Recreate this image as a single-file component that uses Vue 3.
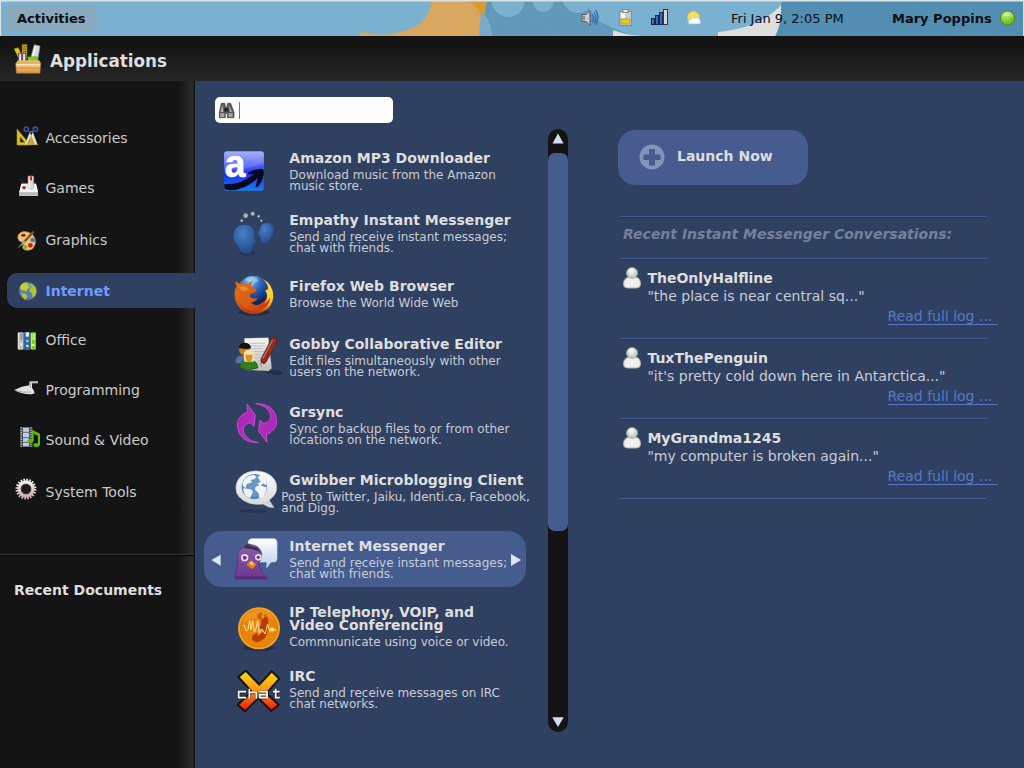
<script setup>
const categories = [
  { id: 'accessories', label: 'Accessories', y: 33 },
  { id: 'games', label: 'Games', y: 183 },
  { id: 'graphics', label: 'Graphics', y: 339 },
  { id: 'internet', label: 'Internet', y: 489, active: true },
  { id: 'office', label: 'Office', y: 39 },
  { id: 'programming', label: 'Programming', y: 189 },
  { id: 'sound', label: 'Sound & Video', y: 339 },
  { id: 'system', label: 'System Tools', y: 495 },
]

const apps = [
  { id: 'amazon', y: 159, title: ['Amazon MP3 Downloader'], desc: ['Download music from the Amazon', 'music store.'] },
  { id: 'empathy', y: 345, title: ['Empathy Instant Messenger'], desc: ['Send and receive instant messages;', 'chat with friends.'] },
  { id: 'firefox', y: 33, title: ['Firefox Web Browser'], desc: ['Browse the World Wide Web'] },
  { id: 'gobby', y: 207, title: ['Gobby Collaborative Editor'], desc: ['Edit files simultaneously with other', 'users on the network.'] },
  { id: 'grsync', y: 411, title: ['Grsync'], desc: ['Sync or backup files to or from other', 'locations on the network.'] },
  { id: 'gwibber', y: 15, title: ['Gwibber Microblogging Client'], desc: ['Post to Twitter, Jaiku, Identi.ca, Facebook,', 'and Digg.'], wide: true },
  { id: 'messenger', y: 213, title: ['Internet Messenger'], desc: ['Send and receive instant messages;', 'chat with friends.'], active: true },
  { id: 'voip', y: 21, title: ['IP Telephony, VOIP, and', 'Video Conferencing'], desc: ['Commnunicate using voice or video.'] },
  { id: 'irc', y: 213, title: ['IRC'], desc: ['Send and receive messages on IRC', 'chat networks.'] },
]

const conversations = [
  { name: 'TheOnlyHalfline', quote: '"the place is near central sq..."' },
  { name: 'TuxThePenguin', quote: '"it\'s pretty cold down here in Antarctica..."' },
  { name: 'MyGrandma1245', quote: '"my computer is broken again..."' },
]
</script>

<template>
  <div class="screen">
    <svg class="sheet" width="0" height="0">
      <defs>
        <linearGradient id="gAmazon" x1="0" y1="0" x2="0" y2="1">
          <stop offset="0" stop-color="#9aa6f6" /><stop offset=".4" stop-color="#4356f2" /><stop offset=".6" stop-color="#1a30f5" /><stop offset="1" stop-color="#1c7dec" />
        </linearGradient>
        <radialGradient id="gFeet" cx=".4" cy=".3" r=".8"><stop offset="0" stop-color="#4a80c4" /><stop offset="1" stop-color="#1f4186" /></radialGradient>
        <radialGradient id="gGlobe" cx=".4" cy=".15" r=".8"><stop offset="0" stop-color="#8ec5ee" /><stop offset=".45" stop-color="#2d68b8" /><stop offset="1" stop-color="#0b2460" /></radialGradient>
        <linearGradient id="gFox" x1="0" y1="0" x2="1" y2="1"><stop offset="0" stop-color="#d87420" /><stop offset=".55" stop-color="#dc5a14" /><stop offset="1" stop-color="#b92c08" /></linearGradient>
        <linearGradient id="gFlame" x1="0" y1="0" x2="0" y2="1"><stop offset="0" stop-color="#f6e05a" /><stop offset=".55" stop-color="#ffcf2c" /><stop offset="1" stop-color="#e2600f" /></linearGradient>
        <linearGradient id="gPurple" x1="0" y1="0" x2="1" y2="1"><stop offset="0" stop-color="#a624b2" /><stop offset="1" stop-color="#ba31c3" /></linearGradient>
        <linearGradient id="gBubble" x1="0" y1="0" x2="0" y2="1"><stop offset="0" stop-color="#f9fafa" /><stop offset="1" stop-color="#d5d9d6" /></linearGradient>
        <linearGradient id="gTalk" x1="0" y1="0" x2="0" y2="1"><stop offset="0" stop-color="#fff" /><stop offset="1" stop-color="#b9cee9" /></linearGradient>
        <linearGradient id="gBird" x1="0" y1="0" x2="0" y2="1"><stop offset="0" stop-color="#8b62a8" /><stop offset="1" stop-color="#6b3593" /></linearGradient>
        <radialGradient id="gCoin"><stop offset="0" stop-color="#ef8b0c" /><stop offset=".8" stop-color="#ea8208" /><stop offset="1" stop-color="#f5a21c" /></radialGradient>
        <linearGradient id="gX" x1="0" y1="0" x2="0" y2="1"><stop offset="0" stop-color="#ffdf12" /><stop offset=".5" stop-color="#fb9116" /><stop offset="1" stop-color="#f0130a" /></linearGradient>
        <linearGradient id="gPaper" x1="0" y1="0" x2="0" y2="1"><stop offset="0" stop-color="#f6f6f6" /><stop offset="1" stop-color="#bfc0bf" /></linearGradient>
        <linearGradient id="gBox" x1="0" y1="0" x2="0" y2="1"><stop offset="0" stop-color="#f7d49b" /><stop offset="1" stop-color="#d79335" /></linearGradient>
        <linearGradient id="gGear" x1="0" y1="0" x2="0" y2="1"><stop offset="0" stop-color="#f4f0f0" /><stop offset="1" stop-color="#d0acb3" /></linearGradient>
        <radialGradient id="gHead" cx=".45" cy=".3" r=".7"><stop offset="0" stop-color="#fff" /><stop offset="1" stop-color="#b9b9b3" /></radialGradient>
        <radialGradient id="gGreen" cx=".4" cy=".3" r=".7"><stop offset="0" stop-color="#b7ec6b" /><stop offset="1" stop-color="#5eb61c" /></radialGradient>

        <!-- sidebar icons -->
        <g id="accessories">
          <path d="M51 57 L91 105 H51Z" fill="#dcc224" stroke="#a18b13" stroke-width="2" /><path d="M60 80v17h14z" fill="#171717" stroke="#9c8914" stroke-width="2" />
          <path d="M86 98l8-25 17 32H85z" fill="#c9ad1b" />
          <path d="M89 66l9-1 15 41-9-5zM99 66l-9-1-16 41 9-6z" fill="#e8e8e4" stroke="#a5a7a2" stroke-width="1" />
          <circle cx="79" cy="58" r="6.500" fill="none" stroke="#2e569b" stroke-width="5" /><circle cx="106" cy="58" r="6.500" fill="none" stroke="#2e569b" stroke-width="5" />
        </g>
        <g id="games">
          <path d="M62 211q4-2 6 4t8 3" fill="none" stroke="#555" stroke-width="2" />
          <path d="M64 221h44l6 26v11H58v-11z" fill="#dededb" /><path d="M64 221h44l6 25H58z" fill="#f5f5f4" /><path d="M58 247h56v10H58z" fill="#b9bab7" />
          <rect x="84" y="198" width="17" height="39" rx="4" fill="#d9dad8" stroke="#a5a5a2" stroke-width="1.5" /><rect x="90" y="199" width="6" height="12" fill="#d11919" /><rect x="86" y="210" width="4" height="25" fill="#fff" />
          <ellipse cx="72" cy="233" rx="6" ry="4" fill="#cc1a1a" />
        </g>
        <g id="graphics">
          <path d="M55 374q10-13 28-8 16 4 22 19 5 18-7 31-12 8-25 3-9-5-3-14 3-7-6-9-15-6-9-22z" fill="#eec078" stroke="#b98842" stroke-width="2" />
          <ellipse cx="70" cy="376" rx="7" ry="4" fill="#4a300e" /><circle cx="91" cy="406" r="7" fill="#d01e1a" /><circle cx="76" cy="411" r="6" fill="#6fb91b" /><circle cx="98" cy="390" r="7" fill="#4b78b8" />
          <path d="M101 365L72 396" stroke="#875016" stroke-width="7" /><path d="M74 391L52 415l23-16" fill="#b0b3b4" stroke="#555" />
        </g>
        <g id="internet">
          <circle cx="84" cy="543" r="27" fill="#527fb8" stroke="#3e608f" stroke-width="2" />
          <path d="M60 532q4-13 18-15l9 5-4 6 7 3-8 6-3 9-8-5-4 3-6-6zM64 548l13 3 6 8-6 11q-12-7-13-22zM90 521q12 3 17 13l2 10-4 14-7 4-3-13-7-6 2-9 7-4-7-3z" fill="#b7c41d" />
          <ellipse cx="76" cy="530" rx="16" ry="9" fill="#fff" opacity=".17" />
        </g>
        <g id="office">
          <rect x="53" y="67" width="18" height="52" rx="3" fill="#bfc2b6" /><rect x="72" y="66" width="19" height="54" rx="3" fill="#3762a5" /><rect x="92" y="67" width="16" height="52" rx="3" fill="#76ce17" />
          <path d="M56 69v47M94 69v47" stroke="#fff" stroke-width="3" opacity=".65" />
          <rect x="77" y="67" width="10" height="13" fill="#dce9f7" /><rect x="60" y="70" width="8" height="20" fill="#9c9f94" /><rect x="97" y="70" width="8" height="20" fill="#b3ef70" />
          <circle cx="64" cy="103" r="4" fill="#e8e8e3" /><circle cx="82" cy="93" r="4" fill="#a9c5e8" /><circle cx="82" cy="108" r="4" fill="#dbe8f7" /><circle cx="100" cy="105" r="4" fill="#ddf8b9" />
        </g>
        <g id="programming">
          <path d="M43 240q22-12 45-14v-9q0-3 5-3h21v6H96v13q7 9 8 17l-10 3q-27 1-51-13z" fill="#e2e2df" /><path d="M91 233v-13q0-4 5-4h18" fill="none" stroke="#83837f" stroke-width="2" /><path d="M49 242q18 7 45 4" stroke="#aaa" stroke-width="3" fill="none" />
        </g>
        <g id="sound">
          <rect x="60" y="351" width="38" height="60" fill="#494b4c" /><rect x="69" y="353" width="18" height="56" fill="#b8cce5" />
          <path d="M64 352v58M93 352v58" stroke="#d3d5d3" stroke-width="4" stroke-dasharray="3 4" /><path d="M69 367h18M69 383h18M69 397h18" stroke="#5c6c83" stroke-width="3" />
          <path d="M98 393v-29l19 9v33" fill="none" stroke="#63c000" stroke-width="6" /><path d="M99 362l18 9v8l-18-9z" fill="#63c000" stroke="#478f00" />
          <ellipse cx="91" cy="393" rx="9" ry="6" fill="#5bb400" /><ellipse cx="109" cy="405" rx="9" ry="6" fill="#5bb400" />
        </g>
        <g id="system">
          <circle cx="78" cy="537" r="28" fill="none" stroke="url(#gGear)" stroke-width="7" stroke-dasharray="5 3.8" /><circle cx="78" cy="537" r="21" fill="none" stroke="url(#gGear)" stroke-width="10" />
          <circle cx="78" cy="537" r="15" fill="#1b1b1b" stroke="#8c7b7e" stroke-width="1.5" />
        </g>

        <!-- application icons -->
        <g id="amazon">
          <rect x="72" y="184" width="120" height="118" rx="9" fill="url(#gAmazon)" />
          <path d="M73 190q0-5 6-5h106q6 0 6 6v28q-60 26-118 20z" fill="#fff" opacity=".13" />
          <text x="74" y="260" font-family="Liberation Sans, Arial, sans-serif" font-weight="700" font-size="118" textLength="62" lengthAdjust="spacingAndGlyphs" fill="#fff" stroke="#fff" stroke-width="2">a</text>
          <path d="M73 282q48 4 90-30l-14 1q-9-2-2-7 18-9 38-10 8 1 6 16-4 23-18 39-8 3-5-6l6-22q-38 37-83 38-17-1-18-7z" fill="#05071c" />
        </g>
        <g id="empathy">
          <ellipse cx="143" cy="489" rx="25" ry="8" fill="#1c2741" opacity=".5" />
          <path d="M101 438q0-31 29-34 31-2 34 28l-1 12 6 9-6 8q-5 0-5 12-2 21-21 19-14-3-23-25-12-10-13-29z" fill="url(#gFeet)" />
          <path d="M174 430l5-9q1-22 20-22 22 1 23 22 0 14-10 22-9 19-18 18-12-1-12-12l-2-11-6-3z" fill="url(#gFeet)" />
          <g fill="#aab0ab"><circle cx="125" cy="392" r="4" /><circle cx="137" cy="377" r="7" /><circle cx="158" cy="371" r="6" /><circle cx="176" cy="379" r="4" /><circle cx="184" cy="392" r="3.5" /></g>
        </g>
        <g id="firefox">
          <ellipse cx="162" cy="157" rx="48" ry="10" fill="#172039" opacity=".55" />
          <circle cx="161" cy="106" r="56" fill="url(#gFox)" />
          <circle cx="160" cy="92" r="45" fill="url(#gGlobe)" />
          <path d="M141 54q14-6 28 0l6 9-12 6-6 10-12-3 3-10-12-4z" fill="#a5d5f3" opacity=".6" />
          <path d="M191 59q20 9 27 34 8 36-20 58-16 9-32 8l18-20q18-12 17-32-1-10-6-16 9 0 9-8-1-13-13-24z" fill="url(#gFlame)" />
          <path d="M107 64q8 4 12 9 12-5 26 0 4-8 12-9-5 10-3 16l16 8q0 9-15 12-7 4-5 10 9 9 23 3-5 13-20 15 10 9 25 7 24-2 32-24 0 20-16 33-20 18-46 13-34-9-43-41-5-22 5-38-4-5-3-14z" fill="url(#gFox)" />
          <path d="M112 116q6 26 39 36 32 8 56-12-18 24-52 22-34-8-43-46z" fill="#c0330a" opacity=".8" />
          <path d="M116 80l21 0 12 10-22 4z" fill="#ed9a3c" opacity=".7" />
        </g>
        <g id="gobby">
          <path d="M178 329l57 2q18 7 9 14-27 2-66-16z" fill="#1c263c" opacity=".65" />
          <path d="M133 235l72-2 10 92-10 8-69-4z" fill="url(#gPaper)" stroke="#9a9c9a" /><path d="M150 250h45M150 258h45M150 266h38M160 275h35M160 284h28M163 293h22M173 302h18M173 312h25" stroke="#aaa" stroke-width="2" />
          <path d="M216 233q8-4 15 4l-1 12-31 56-15 15-1-23z" fill="#8e2e20" stroke="#5d180e" stroke-width="2" /><path d="M218 239l-29 57" stroke="#c06b53" stroke-width="4" /><path d="M184 309v12l9-7" fill="#ead6b8" />
          <path d="M106 310q-2-25 20-25 19 2 18 28z" fill="#54739f" stroke="#2f4366" stroke-width="2" /><circle cx="133" cy="269" r="16" fill="#cd7b1d" /><path d="M117 265q-1-17 18-17 17 1 18 17l-12 2z" fill="#11100d" />
          <path d="M119 323q1-23 28-24 24 1 27 24-26 11-55 0z" fill="#337f20" stroke="#19510d" stroke-width="2" /><path d="M131 285q0-16 16-16t16 16l-2 20h-28z" fill="#eee2a8" /><path d="M137 284h20v10q-2 12-10 12t-10-12z" fill="#e4941c" />
        </g>
        <g id="grsync">
          <path id="sync-arrow" d="M141 432L166 465L162 499L151 488Q125 494 131 518Q142 543 175 548Q119 549 112 500Q110 468 143 455Z" fill="url(#gPurple)" stroke="#cf4fd5" stroke-width="2.500" stroke-linejoin="round" />
          <use href="#sync-arrow" transform="rotate(180 171 489.500)" />
        </g>
        <g id="gwibber">
          <ellipse cx="159" cy="153" rx="42" ry="5" fill="#1d2742" opacity=".5" />
          <path d="M169 33c34 1 61 20 61 49 0 18-10 30-23 38l14 22q-16 2-31-10-46 6-73-22-9-10-9-26c0-30 26-51 61-51z" fill="url(#gBubble)" stroke="#cccfc8" stroke-width="2" />
          <circle cx="163" cy="80" r="38" fill="#5685bd" /><circle cx="162" cy="78" r="32" fill="#7ba5d0" opacity=".55" />
          <path d="M127 70q10-25 34-26l9 7-8 7-10 2 4 7-16 6-3 11-8-5zM130 85l22 3 7 7-9 19q-21-6-20-29zM173 51l9-6q14 8 19 27l-3 4-9-6-7 8-10-7 10-6zM166 81l12-5 22 6q-2 20-14 31l-8 2-2-16-11-9z" fill="#f0f4f7" />
          <path d="M205 124l12 15-23-10z" fill="#c7cbc3" />
        </g>
        <g id="messenger">
          <path d="M154 236h68q9 1 9 11v49q-1 10-9 10h-9l-13 17 1-17h-40q-10 0-12-10l-5-47q1-12 10-13z" fill="url(#gTalk)" stroke="#c9dbf1" stroke-width="2" />
          <path d="M132 260l10-9 12 3q26 3 31 26 2 17-9 28 4 17 11 32l15 13v4H105v-12l5-20q6-22 4-34-4-20 18-31z" fill="url(#gBird)" stroke="#4e2c69" stroke-width="2" />
          <path d="M133 260l10-8 13 7 15 3 12 17q-24-15-50-13z" fill="#3b334b" /><path d="M106 348h88l8 8H105z" fill="#572670" opacity=".7" />
          <circle cx="134" cy="293" r="11" fill="#e6deed" /><circle cx="175" cy="292" r="10" fill="#e6deed" /><circle cx="134" cy="293" r="6" fill="#68388a" /><circle cx="175" cy="292" r="5" fill="#68388a" />
          <path d="M139 314l15-13 15 12-11 15z" fill="#e47e13" /><path d="M146 309l9-6 8 9-7 5z" fill="#ffb94a" />
        </g>
        <g id="voip">
          <ellipse cx="178" cy="174" rx="50" ry="8" fill="#18213a" opacity=".55" />
          <circle cx="177" cy="115" r="61" fill="url(#gCoin)" stroke="#f6a41f" stroke-width="4" /><circle cx="177" cy="115" r="55" fill="none" stroke="#cf5d08" stroke-width="2" />
          <path d="M170 79q8-15 17-11l-4 20q11 2 10-18 12 4 12 34 0 45-34 53-18-4-15-15 2-10 18-15l-2 12 18-16-12-10q9-13 4-25z" fill="#b93c08" />
          <path d="M129 108l4-3 5 18 6-4 5-28 4 28 5-27 5 34 5-10 5-25 5 40 8-14 9 15 8-29 6 20 7-6 13 4" fill="none" stroke="#ffe7a1" stroke-width="3" />
          <circle cx="217" cy="119" r="8" fill="#ffcf38" opacity=".6" /><circle cx="217" cy="119" r="4" fill="#fff3ad" />
          <path d="M127 96q15-36 51-38 34 1 46 31-35-19-97 7z" fill="#ffc355" opacity=".25" />
        </g>
        <g id="irc">
          <path d="M115 261l22-19 41 42 37-40 23 22-39 44 37 34-22 19-39-39-40 40-22-20 42-39z" fill="url(#gX)" stroke="#161310" stroke-width="6" stroke-linejoin="round" />
          <g fill="none" stroke="#22170f" stroke-width="9" opacity=".7"><path d="M139 306h-22v17h22M148 297v29m0-18h21v18M178 306h23v20m0-11h-22v9h22M227 297v26h11M219 306h19" /></g>
          <g fill="none" stroke="#fff" stroke-width="5"><path d="M138 305h-22v18h22M148 296v30m0-19h21v19M178 305h23v21m0-12h-22v9h22M227 296v27h12M219 305h20" /></g>
        </g>
      </defs>
    </svg>

    <header class="panel">
      <svg class="art" viewBox="0 0 1024 36" width="1024" height="36">
        <rect width="1024" height="36" fill="#7bb1d0" />
        <path d="M486 0H584Q590 13 600 22 620 32 636 36H479Z" fill="#6299bb" />
        <path d="M782 0H1024V36H776Z" fill="#528eb2" />
        <path d="M431 0Q431 28 391 34 375 36 365 32 360 33 357 36H480L487 0Z" fill="#d9a75f" />
        <path d="M466 0H487L480 30Q486 10 466 0Z" fill="#dc9931" />
        <path d="M481 12Q491 18 492 36H479Z" fill="#77abc9" />
        <g fill="#7bb1d0"><path d="M491 0H525Q522 17 508 17 494 16 491 0ZM532 0H554Q552 12 543 12 534 11 532 0Z" /><path d="M562 0Q566 12 578 13 583 13 588 10L591 0Z" /></g>
        <path d="M613 30Q625 35 642 36H613ZM718 32Q744 29 755 23 770 17 781 5 782 24 775 36H718Z" fill="#dedede" />
        <path d="M500 18l24 18M530 15l28 21M805 1l43 35M910 1l43 35M960 1l43 35" stroke="#86b5d0" opacity=".15" />
        <path d="M0 .7H1024" stroke="#dce4e6" stroke-width="1.400" /><path d="M.5 0V36M1023.5 0V36" stroke="#dce4e6" />
      </svg>
      <button class="activities">Activities</button>
      <div class="tray">
        <svg class="tray-icons" viewBox="0 0 130 36" width="130" height="36">
          <path d="M2 14.500h4l4-4v15l-4-4H2z" fill="#ccc" stroke="#555" /><path d="M4 16v4" stroke="#888" stroke-width="2" />
          <path d="M12 14q3 4 0 8M14 12q4 6 0 11M15.500 10q5 7 0 15" fill="none" stroke="#376ba9" stroke-width="1.3" />
          <rect x="39.5" y="11.5" width="12" height="14" fill="#c9cbc7" stroke="#8a8c88" /><rect x="43" y="9.5" width="5" height="3" fill="#e5e6e3" stroke="#8a8c88" /><rect x="41" y="19" width="9" height="5" fill="#e3ce0b" stroke="#a29314" stroke-width=".6" /><path d="M41 13h4v5h-4z" fill="#f6f6f5" />
          <g fill="#3e6bb5" stroke="#172951"><rect x="71.5" y="18.5" width="3" height="6" /><rect x="75.5" y="15.5" width="3" height="9" /><rect x="79.5" y="12.5" width="3" height="12" /></g><rect x="83.5" y="9.5" width="4" height="15" fill="#d5d5d8" stroke="#303444" />
          <circle cx="113.5" cy="17.5" r="6" fill="#f2de62" stroke="#e9c937" /><path d="M109 24q-2-4 2-5 2-3 5-1 4-1 4 3 2 2-1 3z" fill="#fff" stroke="#aab9cf" stroke-width=".7" />
        </svg>
        <span class="clock">Fri Jan 9, 2:05 PM</span>
        <span class="user">Mary Poppins</span>
        <svg width="17" height="18" viewBox="0 0 17 18"><circle cx="8.5" cy="9" r="7.2" fill="url(#gGreen)" stroke="#458b16" /><path d="M3 8q1-5 6-5 4 0 5 5-6-2-11 0z" fill="#fff" opacity=".35" /></svg>
      </div>
    </header>

    <div class="titlebar">
      <svg viewBox="36 123 90 105" width="30" height="35">
        <path d="M42 146l13-3 12 26-10 8z" fill="#e7cb19" stroke="#806d08" stroke-width="2" /><rect x="66" y="133" width="15" height="45" fill="#c7a119" stroke="#715b0b" stroke-width="2" /><path d="M70 140h8M70 147h8M70 154h8" stroke="#57450d" stroke-width="2" />
        <path d="M103 134l17 4-7 43-22-3z" fill="#d8dbd8" stroke="#8c8f8b" stroke-width="2" /><path d="M105 139l-7 34" stroke="#fff" stroke-width="4" />
        <path d="M56 160h9v25h-9zM68 160h9v25h-9z" fill="#e9e5ee" stroke="#63426e" stroke-width="3" /><path d="M84 170h28v14H84z" fill="#79cf1d" stroke="#3f810b" />
        <path d="M47 190l7-9h63l6 9z" fill="#e6b86e" /><path d="M47 190h75l-2 30H49z" fill="url(#gBox)" stroke="#9b6b24" stroke-width="2" /><path d="M49 204h72" stroke="#b97931" stroke-width="2" /><path d="M49 193h72" stroke="#ffe5b6" stroke-width="5" />
      </svg>
      <h1>Applications</h1>
    </div>

    <div class="body">
      <aside class="sidebar">
        <nav>
          <a v-for="c in categories" :key="c.id" class="category" :class="{ active: c.active }">
            <svg width="45" height="35" :viewBox="`0 ${c.y} 135 105`"><use :href="'#' + c.id" /></svg>
            <span>{{ c.label }}</span>
          </a>
        </nav>
        <h2>Recent Documents</h2>
      </aside>

      <main class="browser">
        <div class="search">
          <svg viewBox="54 33 51 51" width="17" height="17">
            <path d="M64 37h10l3 13h3l3-13h9l10 27v16H82V67h-6v13H58V64z" fill="#5a5d59" stroke="#343634" stroke-width="2" />
            <path d="M67 41l-6 22h9zM86 41l4 22h6z" fill="#b1b3ae" /><rect x="61" y="67" width="12" height="11" fill="#a6a8a2" /><rect x="86" y="67" width="12" height="11" fill="#a6a8a2" /><path d="M72 51h13v11H72z" fill="#272927" />
          </svg>
          <i class="caret"></i>
        </div>
        <div class="app-list">
          <article v-for="a in apps" :key="a.id" class="app" :class="{ active: a.active, wide: a.wide }">
            <svg width="84" height="60" :viewBox="`12 ${a.y} 252 180`">
              <path v-if="a.active" d="M34 300l28-16v33z" fill="#dce5fa" />
              <use :href="'#' + a.id" />
            </svg>
            <div class="copy">
              <h3><span v-for="t in a.title" :key="t">{{ t }}</span></h3>
              <p><span v-for="d in a.desc" :key="d">{{ d }}</span></p>
            </div>
            <svg v-if="a.active" class="next" width="10" height="12"><path d="M0 0l10 6-10 6z" fill="#dce5fa" /></svg>
          </article>
        </div>
      </main>

      <div class="scrollbar">
        <svg width="20" height="24"><path d="M10 4.500l5.500 10h-11z" fill="#d4def8" /></svg>
        <div class="thumb"></div>
        <svg class="down" width="20" height="24"><path d="M4.300 9.300h11.400L10 19z" fill="#d4def8" /></svg>
      </div>

      <section class="details">
        <button class="launch">
          <svg width="26" height="26"><circle cx="13" cy="13" r="12.500" fill="#8195bc" /><path d="M10 5h6v5.500h5.500v5.500H16v5.500h-6V16H4.500v-5.500H10z" fill="#465c8f" /></svg>
          <span>Launch Now</span>
        </button>
        <h2 class="rule">Recent Instant Messenger Conversations:</h2>
        <article v-for="c in conversations" :key="c.name" class="conversation rule">
          <svg width="18" height="22">
            <path d="M.5 17q0-6 6-7h6q5 1 5 7 0 4-4 4h-9q-4 0-4-4z" fill="#efefec" stroke="#b1b2ac" /><circle cx="9" cy="6" r="5.500" fill="url(#gHead)" stroke="#aaaaa5" stroke-width=".7" />
          </svg>
          <div>
            <h3>{{ c.name }}</h3>
            <p>{{ c.quote }}</p>
          </div>
          <a>Read full log ...&nbsp;</a>
        </article>
        <div class="rule"></div>
      </section>
    </div>
  </div>
</template>

<style>
body { margin: 0; background: #141414; }
</style>

<style scoped>
.screen { position: relative; width: 1024px; height: 768px; overflow: hidden; display: flex; flex-direction: column; background: #304060; color: #dedede; font-family: "DejaVu Sans", sans-serif; font-size: 14px; }
.screen * { box-sizing: border-box; }
h1, h2, h3, p { margin: 0; font-size: 14px; white-space: nowrap; }
button { border: 0; font: inherit; color: inherit; }
svg { display: block; flex: none; }
.sheet { position: absolute; }
.panel { position: relative; flex: none; height: 36px; display: flex; align-items: center; justify-content: space-between; color: #0b0d10; font-size: 13px; }
.art { position: absolute; inset: 0; }
.activities { position: relative; margin-left: 5px; width: 92px; height: 27px; padding: 0 0 0 12px; border-radius: 8px; background: #89aabd; font-weight: 700; text-align: left; }
.tray { position: relative; display: flex; align-items: center; padding-right: 8px; white-space: nowrap; }
.clock { width: 182px; padding-left: 21px; }
.user { width: 107px; font-weight: 700; }
.titlebar { flex: none; height: 45px; display: flex; align-items: center; padding: 0 0 0 12px; background: linear-gradient(#141414 20%, #272727); }
.titlebar svg { margin-top: -1px; }
.titlebar h1 { margin: 5px 0 0 8px; font-size: 16.800px; line-height: 20px; }
.body { flex: 1; display: flex; min-height: 0; }
.sidebar { flex: none; width: 195px; background: linear-gradient(90deg, transparent 178px, #2d2d2d 193px, #111 194px) #141414; }
.sidebar nav { height: 474px; padding-top: 40px; display: grid; grid-template-rows: 50px 52px 50px 50px 50px 50px 52px 35px; align-items: start; border-bottom: 1px solid #3a3a3a; box-shadow: 0 1px #000; }
.category { height: 35px; display: flex; align-items: center; color: #cacaca; white-space: nowrap; }
.category span { margin-left: .5px; padding-bottom: 2px; }
.category.active span { padding-bottom: 0; }
.category.active { margin-left: 7px; border-radius: 10px 0 0 10px; background: #304060; color: #6e9cff; font-weight: 700; }
.category.active svg { margin-left: -7px; }
.sidebar h2 { margin: 27px 0 0 14px; line-height: 17px; }
.browser { flex: none; width: 353px; }
.search { display: flex; align-items: center; width: 178px; height: 26px; margin: 16px 0 20px 20px; padding-left: 3px; border-radius: 5px; background: #fff; }
.caret { width: 1px; height: 17px; margin-left: 4px; background: #777; }
.app-list { display: grid; grid-template-rows: 62px 66px 58px 68px 68px 66px 66px 64px 60px; align-items: start; margin-left: 9px; }
.app { display: flex; height: 56px; width: 322px; }
.app .copy { width: 241px; margin-left: 1.300px; padding-top: 9px; }
.app h3 { line-height: 13px; }
.app p { margin-top: 5px; font-size: 12px; line-height: 11px; color: #c9ccd3; }
.app span { display: block; }
.app.wide p { margin-left: -8px; }
.app.active { position: relative; border-radius: 18px; background: #465c8f; }
.next { position: absolute; left: 307px; top: 23px; }
.scrollbar { flex: none; width: 20px; height: 603px; margin-top: 48px; border-radius: 10px; background: #141414; overflow: hidden; display: flex; flex-direction: column; }
.thumb { height: 378px; border-radius: 7px; background: #465c8f; }
.down { margin-top: auto; }
.details { width: 366px; margin: 49px 0 0 52px; }
.launch { display: flex; align-items: center; width: 190px; height: 55px; margin: 0 0 31px -2px; padding: 0 0 2px 21px; border-radius: 17px; background: #465c8f; font-weight: 700; }
.launch span { margin-left: 12px; padding-bottom: 2px; }
.rule { border-top: 1px solid #435b96; box-shadow: inset 0 1px #26334f; }
h2.rule { height: 42px; padding: 8px 0 0 3px; line-height: 18px; font-style: italic; color: #74819a; }
.conversation { display: grid; grid-template-columns: 27px 1fr; grid-template-rows: 47px 20px; height: 80px; }
.conversation svg { margin: 8px 0 0 3px; }
.conversation div { margin-left: .4px; padding-top: 10px; line-height: 18px; }
.conversation h3 { line-height: 18px; }
.conversation p { color: #c9ccd3; }
.conversation a { grid-column: 1 / -1; justify-self: end; width: 110px; height: 19px; margin-right: -11.500px; line-height: 20px; border-bottom: 1px solid #5679c6; color: #5679c6; white-space: nowrap; }
</style>
